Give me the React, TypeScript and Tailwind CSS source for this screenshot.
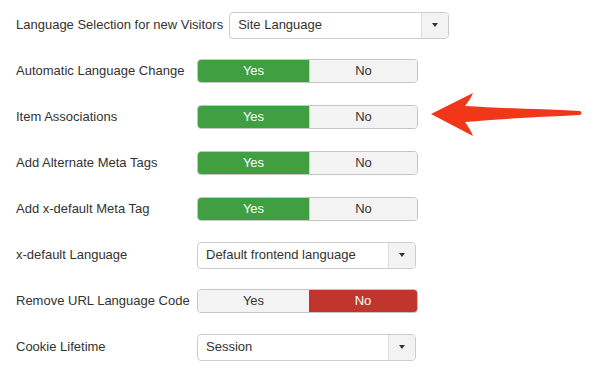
type Row =
   | { label: string; kind: "toggle"; value: "yes" | "no" }
   | { label: string; kind: "select"; value: string; wide?: boolean };

const rows: Row[] = [
   { label: "Language Selection for new Visitors", kind: "select", value: "Site Language", wide: true },
   { label: "Automatic Language Change", kind: "toggle", value: "yes" },
   { label: "Item Associations", kind: "toggle", value: "yes" },
   { label: "Add Alternate Meta Tags", kind: "toggle", value: "yes" },
   { label: "Add x-default Meta Tag", kind: "toggle", value: "yes" },
   { label: "x-default Language", kind: "select", value: "Default frontend language" },
   { label: "Remove URL Language Code", kind: "toggle", value: "no" },
   { label: "Cookie Lifetime", kind: "select", value: "Session" },
];

const Toggle = ({ value }: { value: "yes" | "no" }) => (
   <div className="flex h-[24px] w-[221px] overflow-hidden rounded-[4px] border border-[#c4c4c4] text-[13px]">
      <div
         className={
            value === "yes"
               ? "flex w-[111px] items-center justify-center bg-[#3f9f41] text-white"
               : "flex w-[111px] items-center justify-center bg-[#f3f3f3] text-[#333]"
         }
      >
         Yes
      </div>
      <div
         className={
            value === "no"
               ? "flex flex-1 items-center justify-center bg-[#c0362c] text-white"
               : "flex flex-1 items-center justify-center border-l border-[#d0d0d0] bg-[#f3f3f3] text-[#333]"
         }
      >
         No
      </div>
   </div>
);

const Select = ({ value, wide }: { value: string; wide?: boolean }) => (
   <div
      className={`flex h-[27px] overflow-hidden rounded-[4px] border border-[#cccccc] bg-white text-[13px] text-[#333] ${
         wide ? "w-[220px]" : "w-[219px]"
      }`}
   >
      <div className="flex flex-1 items-center pl-[8px]">{value}</div>
      <div className="flex w-[27px] items-center justify-center border-l border-[#dddddd] bg-[#f3f3f3]">
         <div className="h-0 w-0 border-x-[3.5px] border-t-[4px] border-x-transparent border-t-[#333]" />
      </div>
   </div>
);

export default function App() {
   return (
      <div
         className="relative h-[372px] w-[603px] overflow-hidden bg-white pt-[2px] text-[#333]"
         style={{ fontFamily: '"Liberation Sans", Arial, sans-serif' }}
      >
         {rows.map(row => (
            <div key={row.label} className="flex h-[46px] items-center pl-[16px]">
               <label className="min-w-[181px] shrink-0 pr-[6px] text-[13px] text-[#333]">
                  {row.label}
               </label>
               {row.kind === "toggle" ? (
                  <Toggle value={row.value} />
               ) : (
                  <Select value={row.value} wide={row.wide} />
               )}
            </div>
         ))}

         {/* annotation arrow */}
         <svg
            className="absolute left-[428px] top-[90px]"
            width="160"
            height="50"
            viewBox="0 0 160 50"
         >
            <path
               d="M3 24 L45 3 C43 8 40 12 37 16 C70 18 110 19 152 21 C154 22 154 24 152 25 C110 27 70 29 37 32 C40 36 43 41 45 46 Z"
               fill="#f2361a"
            />
         </svg>
      </div>
   );
}
